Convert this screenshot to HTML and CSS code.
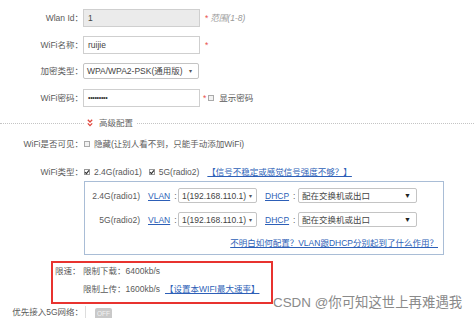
FILE: index.html
```html
<!DOCTYPE html>
<html lang="zh">
<head>
<meta charset="utf-8">
<link rel="stylesheet" href="styles.css">
</head>
<body>
<div class="page">
  <div class="top">
    <div class="row">
      <span class="lbl">Wlan Id：</span>
      <div class="input disabled">1</div>
      <span class="req">*</span><span class="hint">范围(1-8)</span>
    </div>
    <div class="row">
      <span class="lbl">WiFi名称：</span>
      <div class="input">ruijie</div>
      <span class="req">*</span>
    </div>
    <div class="row">
      <span class="lbl">加密类型：</span>
      <div class="sel enc"><span>WPA/WPA2-PSK(通用版)</span><span class="arr">▾</span></div>
    </div>
    <div class="row">
      <span class="lbl">WiFi密码：</span>
      <div class="input pwd">•••••••••</div>
      <span class="req req2">*</span><span class="cb"></span><span class="show">显示密码</span>
    </div>
  </div>

  <div class="divider">
    <span class="dl short"></span>
    <svg class="chev" width="6" height="8" viewBox="0 0 6 8"><path d="M0.8 0.8 L3 3 L5.2 0.8 M0.8 4.4 L3 6.6 L5.2 4.4" fill="none" stroke="#e0463c" stroke-width="1.3"/></svg>
    <span class="adv">高级配置</span>
    <span class="dl"></span>
  </div>

  <div class="row small vis">
    <span class="lbl">WiFi是否可见：</span>
    <span class="cb"></span>
    <span>隐藏(让别人看不到，只能手动添加WiFi)</span>
  </div>

  <div class="row small type">
    <span class="lbl">WiFi类型：</span>
    <span class="cb on"><svg width="6" height="6" viewBox="0 0 6 6"><path d="M1 3.2 L2.4 4.6 L5 1.4" fill="none" stroke="#333" stroke-width="1.2"/></svg></span>
    <span>2.4G(radio1)</span>
    <span class="cb on second"><svg width="6" height="6" viewBox="0 0 6 6"><path d="M1 3.2 L2.4 4.6 L5 1.4" fill="none" stroke="#333" stroke-width="1.2"/></svg></span>
    <span>5G(radio2)</span>
    <a class="link sig">【信号不稳定或感觉信号强度不够？】</a>
  </div>

  <div class="box">
    <div class="brow">
      <span class="blbl">2.4G(radio1)</span>
      <span class="key vkey"><a class="link">VLAN</a><span class="colon">:</span></span>
      <div class="sel vsel"><span>1(192.168.110.1)</span><span class="arr">▾</span></div>
      <span class="key dkey"><a class="link">DHCP</a><span class="colon">:</span></span>
      <div class="sel dsel"><span>配在交换机或出口</span><span class="arr big">▼</span></div>
    </div>
    <div class="brow">
      <span class="blbl">5G(radio2)</span>
      <span class="key vkey"><a class="link">VLAN</a><span class="colon">:</span></span>
      <div class="sel vsel"><span>1(192.168.110.1)</span><span class="arr">▾</span></div>
      <span class="key dkey"><a class="link">DHCP</a><span class="colon">:</span></span>
      <div class="sel dsel"><span>配在交换机或出口</span><span class="arr big">▼</span></div>
    </div>
    <div class="helprow"><a class="link">不明白如何配置？VLAN跟DHCP分别起到了什么作用？</a></div>
  </div>

  <div class="limit">
    <div class="lrow"><span class="lkey">限速：</span><span>限制下载：6400kb/s</span></div>
    <div class="lrow"><span class="lkey"></span><span>限制上传：1600kb/s</span><a class="link rate">【设置本WIFI最大速率】</a></div>
  </div>

  <div class="row small bottom">
    <span class="lbl">优先接入5G网络：</span>
    <span class="vline"></span>
    <span class="toggle">OFF</span>
  </div>

  <div class="watermark">CSDN @你可知这世上再难遇我</div>
</div>
</body>
</html>
```

FILE: styles.css
```css
html, body {
  margin: 0;
  padding: 0;
  background: #fff;
}

.page {
  position: relative;
  width: 474px;
  height: 318px;
  overflow: hidden;
  font-family: "Liberation Sans", "Noto Sans CJK SC", sans-serif;
  font-size: 8.5px;
  line-height: 12px;
  color: #5a5a5a;
}

.top {
  display: flex;
  flex-direction: column;
  gap: 8.5px;
  padding-top: 9px;
}

.row {
  display: flex;
  align-items: center;
  height: 18px;
}

.row.small {
  height: 14px;
}

.lbl {
  flex: none;
  width: 83px;
  text-align: right;
  color: #5a5a5a;
  white-space: nowrap;
}

.input {
  box-sizing: border-box;
  width: 117px;
  height: 18px;
  border: 1px solid #cfcfcf;
  padding-left: 4px;
  display: flex;
  align-items: center;
  color: #444;
}

.input.disabled {
  background: #ebebeb;
}

.input.pwd {
  font-size: 7px;
  letter-spacing: -0.3px;
  color: #333;
}

.req {
  color: #e8524a;
  margin-left: 5px;
}

.req2 {
  margin-left: 3px;
}

.hint {
  color: #999;
  font-style: italic;
  margin-left: 2px;
}

.show {
  margin-left: 1px;
}

.sel {
  box-sizing: border-box;
  display: flex;
  align-items: center;
  justify-content: space-between;
  border: 1px solid #c4c4c4;
  border-radius: 2px;
  padding: 0 4px 0 3px;
  color: #444;
  background: #fff;
  white-space: nowrap;
}

.sel.enc {
  width: 116px;
  height: 16px;
  padding-right: 6px;
}

.arr {
  font-size: 6px;
  color: #555;
}

.arr.big {
  font-size: 7px;
  color: #222;
}

.cb {
  flex: none;
  box-sizing: border-box;
  width: 6px;
  height: 6px;
  border: 1px solid #aaa;
  background: #f2f2f2;
  margin: 0 4px 0 1px;
  display: flex;
  align-items: center;
  justify-content: center;
  overflow: visible;
}

.cb svg {
  flex: none;
}

.cb.on {
  border-color: #999;
  background: #fff;
}

.cb.second {
  margin-left: 7px;
}

.req2 + .cb {
  margin-left: 2px;
}

.divider {
  display: flex;
  align-items: center;
  height: 10px;
  margin-top: 11.5px;
}

.dl {
  flex: 1;
  border-top: 1px dotted #c4c4c4;
}

.dl.short {
  flex: 0 0 84px;
}

.chev {
  margin: 0 6px 0 3px;
}

.adv {
  color: #666;
  margin-right: 4px;
}

.vis {
  margin-top: 8.5px;
}

.type {
  margin-top: 14.5px;
}

.link {
  color: #2d5fb7;
  text-decoration: underline;
  white-space: nowrap;
}

.sig {
  margin-left: 8px;
}

.box {
  box-sizing: border-box;
  width: 360px;
  margin: 2px 0 0 84px;
  border: 1px solid #a9bdd6;
  padding: 6px 5px 5px 0;
}

.brow {
  display: flex;
  align-items: center;
  height: 15px;
}

.brow + .brow {
  margin-top: 9px;
}

.blbl {
  flex: none;
  width: 55px;
  text-align: right;
}

.key {
  flex: none;
  box-sizing: border-box;
  display: flex;
  align-items: center;
  padding-left: 8px;
}

.vkey {
  width: 38px;
}

.dkey {
  width: 41px;
}

.colon {
  margin-left: 4px;
}

.vsel {
  width: 79px;
  height: 15px;
}

.dsel {
  width: 119px;
  height: 15px;
  padding-right: 5px;
}

.helprow {
  display: flex;
  justify-content: flex-end;
  height: 12px;
  margin-top: 9.5px;
}

.limit {
  box-sizing: border-box;
  width: 222px;
  margin: 6.5px 0 0 51px;
  border: 2px solid #e8332f;
  padding: 2px 0 7px 2px;
}

.lrow {
  display: flex;
  align-items: center;
  height: 12px;
}

.lrow + .lrow {
  margin-top: 6px;
}

.lkey {
  flex: none;
  width: 28px;
}

.rate {
  margin-left: 5px;
}

.bottom {
  margin-top: 2px;
  align-items: flex-start;
}

.vline {
  flex: none;
  width: 1px;
  height: 14px;
  background: #ddd;
  margin-left: 2px;
}

.toggle {
  flex: none;
  width: 17px;
  height: 12px;
  margin: 2px 0 0 9px;
  background: #c9c9c9;
  border-radius: 2px;
  color: #f4f4f4;
  font-size: 6.5px;
  line-height: 11px;
  text-align: center;
}

.watermark {
  position: absolute;
  left: 273px;
  top: 293.5px;
  font-size: 13.4px;
  line-height: 17px;
  color: #8a8a8a;
  white-space: nowrap;
}
```
